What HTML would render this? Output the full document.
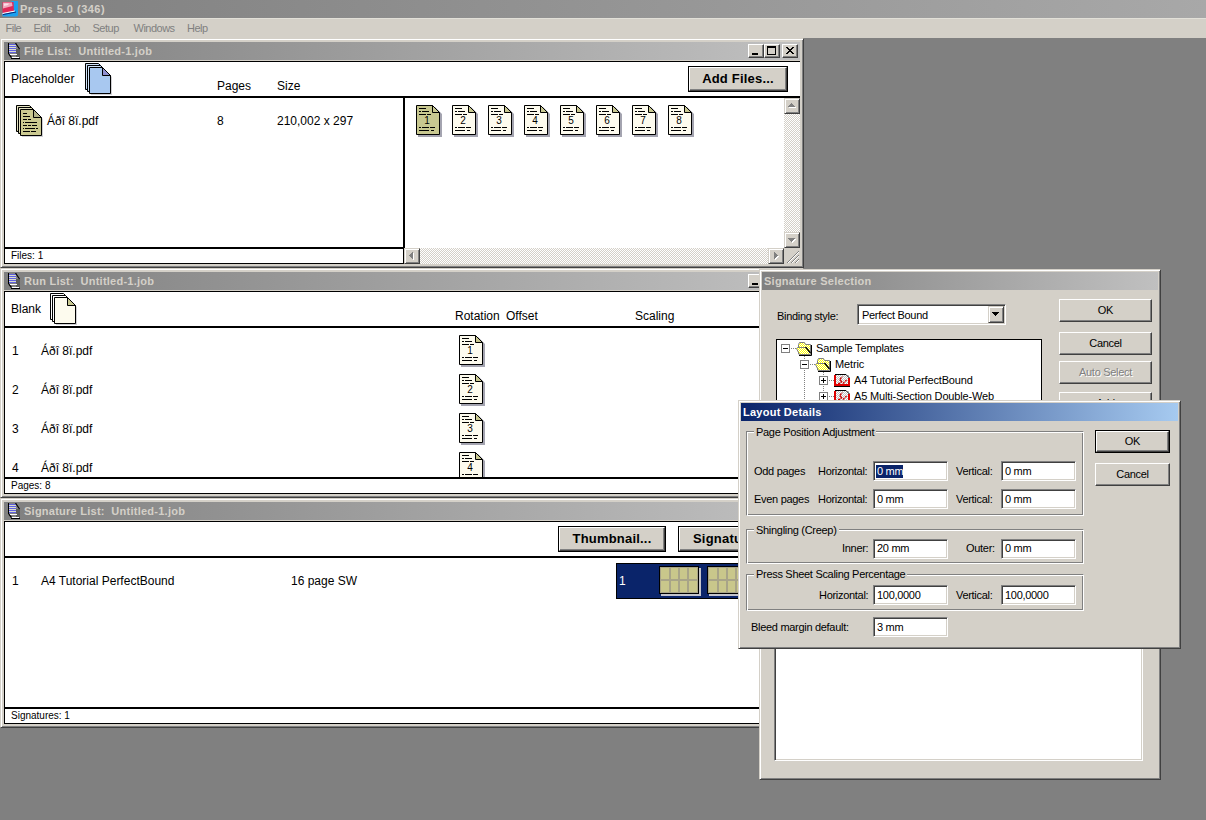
<!DOCTYPE html>
<html><head><meta charset="utf-8">
<style>
html,body{margin:0;padding:0;}
body{width:1206px;height:820px;overflow:hidden;position:relative;background:#808080;font-family:"Liberation Sans",sans-serif;font-size:11px;color:#000;}
div{box-sizing:border-box;}
.t{position:absolute;white-space:nowrap;line-height:1;}
.chk{background-color:#fff;background-image:linear-gradient(45deg,#d4d0c8 25%,transparent 25%,transparent 75%,#d4d0c8 75%),linear-gradient(45deg,#d4d0c8 25%,transparent 25%,transparent 75%,#d4d0c8 75%);background-size:2px 2px;background-position:0 0,1px 1px;}
</style></head><body>

<svg width="0" height="0" style="position:absolute">
<defs>
<symbol id="doc16" viewBox="0 0 16 16">
<rect x="9" y="6" width="4" height="9" fill="#5c5c5c"/>
<rect x="2" y="1" width="7" height="9" fill="#d8dccc"/>
<path d="M2 1.5H9M2 3.5H9M2 5.5H9M2 7.5H9M2 9.5H9" stroke="#6060e0"/>
<path d="M1.5 0V11" stroke="#000"/>
<path d="M8.5 0L12.5 6" stroke="#000" stroke-width="1.2"/>
<path d="M1.8 11.2L4.5 14.5" stroke="#000" stroke-width="1.2"/>
<path d="M4 15.5H13" stroke="#000"/>
<path d="M3 11.5H10M5 14.5H12" stroke="#fff"/>
</symbol>
<pattern id="ychk" width="2" height="2" patternUnits="userSpaceOnUse"><rect width="2" height="2" fill="#ffff00"/><rect width="1" height="1" fill="#fff"/><rect x="1" y="1" width="1" height="1" fill="#fff"/></pattern>
<pattern id="gchk" width="2" height="2" patternUnits="userSpaceOnUse"><rect width="2" height="2" fill="#c0c0c0"/><rect width="1" height="1" fill="#fff"/><rect x="1" y="1" width="1" height="1" fill="#fff"/></pattern>
<symbol id="pg" viewBox="0 0 26 32">
<path d="M2 2H19L26 9V32H2Z" fill="#a4a4b0"/>
<path d="M0.5 0.5H16.5L23.5 7.5V29.5H0.5Z" fill="currentColor" stroke="#000"/>
<path d="M16.5 0.5V7.5H23.5Z" fill="#c8c890" stroke="#000" stroke-linejoin="bevel"/>
<path d="M3 3.5H10M3 6.5H5M6 6.5H13M3 9.5H10M11 9.5H15M3 22.5H5M6 22.5H13M14 22.5H19M3 25.5H13M15 25.5H18" stroke="#000"/>
</symbol>
</defs>
</svg>

<div style="position:absolute;left:0px;top:0px;width:1206px;height:18px;background:linear-gradient(to right,#808080,#a8a8a8);"></div>
<div style="position:absolute;left:2px;top:1px;"><svg width="17" height="16" style="display:block">
<path d="M10 0H16V14.5L14 15.5H0.5V11Z" fill="#1aa0f0"/>
<path d="M0.5 1H11.5L12 10L0.5 12.5Z" fill="#e02858"/>
<path d="M1 1.5H10L10.5 5L1 7.5Z" fill="#f0a8bc"/>
<path d="M2 2.5H7L6 4L2 5Z" fill="#fbe0e8"/>
<path d="M0.5 12.5L13 10" stroke="#fff" stroke-width="1.2"/>
<path d="M1 13.6L14 11" stroke="#0c2a78" stroke-width="1"/>
</svg></div>
<div class="t" style="left:20px;top:4px;font-size:11px;font-weight:bold;color:#d4d0c8;letter-spacing:0.5px;">Preps 5.0 (346)</div>
<div style="position:absolute;left:0px;top:18px;width:1206px;height:20px;background:#d4d0c8;"></div>
<div style="position:absolute;left:0px;top:18px;width:1206px;height:1px;background:#e2e0d8;"></div>
<div class="t" style="left:5.5px;top:23px;font-size:11px;color:#808080;letter-spacing:-0.5px;">File</div>
<div class="t" style="left:33.5px;top:23px;font-size:11px;color:#808080;letter-spacing:-0.5px;">Edit</div>
<div class="t" style="left:63.5px;top:23px;font-size:11px;color:#808080;letter-spacing:-0.5px;">Job</div>
<div class="t" style="left:92.5px;top:23px;font-size:11px;color:#808080;letter-spacing:-0.5px;">Setup</div>
<div class="t" style="left:133.5px;top:23px;font-size:11px;color:#808080;letter-spacing:-0.5px;">Windows</div>
<div class="t" style="left:187px;top:23px;font-size:11px;color:#808080;letter-spacing:-0.5px;">Help</div>
<div style="position:absolute;left:0px;top:38px;width:804px;height:230px;border:1px solid;border-color:#d4d0c8 #404040 #404040 #d4d0c8;box-shadow:inset 1px 1px #fff,inset -1px -1px #808080;background:#d4d0c8;"></div>
<div style="position:absolute;left:4px;top:42px;width:796px;height:18px;background:linear-gradient(to right,#808080,#c0c0c0);"></div>
<div style="position:absolute;left:7px;top:43px;"><svg width="16" height="16"><use href="#doc16"/></svg></div>
<div class="t" style="left:24px;top:46px;font-size:11px;font-weight:bold;color:#d4d0c8;letter-spacing:0.25px;">File List:&nbsp; Untitled-1.job</div>
<div style="position:absolute;left:748px;top:44px;width:16px;height:14px;border:1px solid;border-color:#fff #404040 #404040 #fff;box-shadow:inset -1px -1px #808080;background:#d4d0c8;"></div>
<div style="position:absolute;left:752px;top:53px;width:6px;height:2px;background:#000;"></div>
<div style="position:absolute;left:764px;top:44px;width:16px;height:14px;border:1px solid;border-color:#fff #404040 #404040 #fff;box-shadow:inset -1px -1px #808080;background:#d4d0c8;"></div>
<div style="position:absolute;left:767px;top:46px;width:9px;height:9px;border:1px solid #000;border-top-width:2px;"></div>
<div style="position:absolute;left:782px;top:44px;width:16px;height:14px;border:1px solid;border-color:#fff #404040 #404040 #fff;box-shadow:inset -1px -1px #808080;background:#d4d0c8;"></div>
<div style="position:absolute;left:786px;top:47px;"><svg width="8" height="7" style="display:block"><path d="M0 0L7 7M1 0L8 7M7 0L0 7M8 0L1 7" stroke="#000" stroke-width="1" shape-rendering="crispEdges"/></svg></div>
<div style="position:absolute;left:4px;top:61px;width:796px;height:203px;overflow:hidden;background:#fff;">
<div style="position:absolute;left:0px;top:0px;width:796px;height:1px;background:#000;"></div>
<div style="position:absolute;left:0px;top:0px;width:1px;height:203px;background:#000;"></div>
<div style="position:absolute;left:0px;top:202px;width:796px;height:1px;background:#000;"></div>
<div class="t" style="left:7px;top:12px;font-size:12px;color:#000;">Placeholder</div>
<div style="position:absolute;left:81px;top:2px;"><svg width="28" height="34" style="display:block"><path d="M0.5 0.5H13.5L21.5 8.5V26.5H0.5Z" fill="#a8c8f0" stroke="#000"/><path d="M1.5 25V1.5H13" fill="none" stroke="#cfe2f8"/><path d="M2.5 2.5H15.5L23.5 10.5V28.5H2.5Z" fill="#a8c8f0" stroke="#000"/><path d="M3.5 27V3.5H15" fill="none" stroke="#cfe2f8"/><path d="M6 6H19L27 14V32H6Z" fill="#b0b0b8" opacity="0.6"/><path d="M4.5 4.5H17.5L25.5 12.5V30.5H4.5Z" fill="#a8c8f0" stroke="#000"/><path d="M17.5 4.5V12.5H25.5Z" fill="#9090d0" stroke="#000" stroke-linejoin="bevel"/></svg></div>
<div class="t" style="left:213px;top:19px;font-size:12px;color:#000;">Pages</div>
<div class="t" style="left:273px;top:19px;font-size:12px;color:#000;">Size</div>
<div style="position:absolute;left:684px;top:5px;width:100px;height:26px;background:#000;"></div>
<div style="position:absolute;left:685px;top:6px;width:98px;height:24px;border:1px solid;border-color:#fff #404040 #404040 #fff;box-shadow:inset -1px -1px #808080;background:#d4d0c8;"></div>
<div class="t" style="left:684px;top:11px;width:100px;text-align:center;font-size:13px;font-weight:bold;letter-spacing:0.2px;color:#000;">Add Files...</div>
<div style="position:absolute;left:0px;top:35px;width:796px;height:2px;background:#000;"></div>
<div style="position:absolute;left:12px;top:44px;"><svg width="28" height="34" style="display:block"><path d="M0.5 0.5H13.5L21.5 8.5V26.5H0.5Z" fill="#cbc991" stroke="#000"/><path d="M1.5 25V1.5H13" fill="none" stroke="#e6e4c4"/><path d="M2.5 2.5H15.5L23.5 10.5V28.5H2.5Z" fill="#cbc991" stroke="#000"/><path d="M3.5 27V3.5H15" fill="none" stroke="#e6e4c4"/><path d="M6 6H19L27 14V32H6Z" fill="#b0b0b8" opacity="0.6"/><path d="M4.5 4.5H17.5L25.5 12.5V30.5H4.5Z" fill="#cbc991" stroke="#000"/><path d="M17.5 4.5V12.5H25.5Z" fill="#b4b48c" stroke="#000" stroke-linejoin="bevel"/><path d="M7 8.5H11M7 11.5H14M7 14.5H11M12 14.5H15M7 17.5H8M9 17.5H21M7 20.5H11M12 20.5H15M16 20.5H21M7 23.5H8M9 23.5H19M20 23.5H22M7 26.5H14M15 26.5H20" stroke="#000"/></svg></div>
<div class="t" style="left:43px;top:54px;font-size:12px;color:#000;">Áðî 8ï.pdf</div>
<div class="t" style="left:213px;top:54px;font-size:12px;color:#000;">8</div>
<div class="t" style="left:273px;top:54px;font-size:12px;color:#000;">210,002 x 297</div>
<div style="position:absolute;left:399px;top:37px;width:2px;height:166px;background:#000;"></div>
<div style="position:absolute;left:0px;top:186px;width:401px;height:2px;background:#000;"></div>
<div class="t" style="left:7px;top:190px;font-size:10px;color:#000;">Files: 1</div>
<div style="position:absolute;left:412px;top:44px;"><div style="position:relative;width:26px;height:32px;color:#c8c890"><svg width="26" height="32" style="display:block"><use href="#pg"/></svg><div class="t" style="left:0;width:22px;top:11px;text-align:center;font-size:10px;color:#000">1</div></div></div>
<div style="position:absolute;left:448px;top:44px;"><div style="position:relative;width:26px;height:32px;color:#fdfbee"><svg width="26" height="32" style="display:block"><use href="#pg"/></svg><div class="t" style="left:0;width:22px;top:11px;text-align:center;font-size:10px;color:#000">2</div></div></div>
<div style="position:absolute;left:484px;top:44px;"><div style="position:relative;width:26px;height:32px;color:#fdfbee"><svg width="26" height="32" style="display:block"><use href="#pg"/></svg><div class="t" style="left:0;width:22px;top:11px;text-align:center;font-size:10px;color:#000">3</div></div></div>
<div style="position:absolute;left:520px;top:44px;"><div style="position:relative;width:26px;height:32px;color:#fdfbee"><svg width="26" height="32" style="display:block"><use href="#pg"/></svg><div class="t" style="left:0;width:22px;top:11px;text-align:center;font-size:10px;color:#000">4</div></div></div>
<div style="position:absolute;left:556px;top:44px;"><div style="position:relative;width:26px;height:32px;color:#fdfbee"><svg width="26" height="32" style="display:block"><use href="#pg"/></svg><div class="t" style="left:0;width:22px;top:11px;text-align:center;font-size:10px;color:#000">5</div></div></div>
<div style="position:absolute;left:592px;top:44px;"><div style="position:relative;width:26px;height:32px;color:#fdfbee"><svg width="26" height="32" style="display:block"><use href="#pg"/></svg><div class="t" style="left:0;width:22px;top:11px;text-align:center;font-size:10px;color:#000">6</div></div></div>
<div style="position:absolute;left:628px;top:44px;"><div style="position:relative;width:26px;height:32px;color:#fdfbee"><svg width="26" height="32" style="display:block"><use href="#pg"/></svg><div class="t" style="left:0;width:22px;top:11px;text-align:center;font-size:10px;color:#000">7</div></div></div>
<div style="position:absolute;left:664px;top:44px;"><div style="position:relative;width:26px;height:32px;color:#fdfbee"><svg width="26" height="32" style="display:block"><use href="#pg"/></svg><div class="t" style="left:0;width:22px;top:11px;text-align:center;font-size:10px;color:#000">8</div></div></div>
<div style="position:absolute;left:780px;top:53px;width:16px;height:118px;background:repeating-conic-gradient(#d4d0c8 0 25%,#fff 0 50%) 0 0/2px 2px;"></div>
<div style="position:absolute;left:416px;top:187px;width:348px;height:16px;background:repeating-conic-gradient(#d4d0c8 0 25%,#fff 0 50%) 0 0/2px 2px;"></div>
<div style="position:absolute;left:780px;top:37px;width:16px;height:16px;border:1px solid;border-color:#d4d0c8 #404040 #404040 #d4d0c8;box-shadow:inset 1px 1px #fff,inset -1px -1px #808080;background:#d4d0c8;"></div>
<div style="position:absolute;left:780px;top:37px;"><svg width="16" height="16" style="display:block"><rect x="5" y="9" width="7" height="1" fill="#fff"/><rect x="6" y="8" width="5" height="1" fill="#fff"/><rect x="7" y="7" width="3" height="1" fill="#fff"/><rect x="8" y="6" width="1" height="1" fill="#fff"/><rect x="4" y="8" width="7" height="1" fill="#808080"/><rect x="5" y="7" width="5" height="1" fill="#808080"/><rect x="6" y="6" width="3" height="1" fill="#808080"/><rect x="7" y="5" width="1" height="1" fill="#808080"/></svg></div>
<div style="position:absolute;left:780px;top:171px;width:16px;height:16px;border:1px solid;border-color:#d4d0c8 #404040 #404040 #d4d0c8;box-shadow:inset 1px 1px #fff,inset -1px -1px #808080;background:#d4d0c8;"></div>
<div style="position:absolute;left:780px;top:171px;"><svg width="16" height="16" style="display:block"><rect x="5" y="7" width="7" height="1" fill="#fff"/><rect x="6" y="8" width="5" height="1" fill="#fff"/><rect x="7" y="9" width="3" height="1" fill="#fff"/><rect x="8" y="10" width="1" height="1" fill="#fff"/><rect x="4" y="6" width="7" height="1" fill="#808080"/><rect x="5" y="7" width="5" height="1" fill="#808080"/><rect x="6" y="8" width="3" height="1" fill="#808080"/><rect x="7" y="9" width="1" height="1" fill="#808080"/></svg></div>
<div style="position:absolute;left:400px;top:187px;width:16px;height:16px;border:1px solid;border-color:#d4d0c8 #404040 #404040 #d4d0c8;box-shadow:inset 1px 1px #fff,inset -1px -1px #808080;background:#d4d0c8;"></div>
<div style="position:absolute;left:400px;top:187px;"><svg width="16" height="16" style="display:block"><rect x="9" y="5" width="1" height="7" fill="#fff"/><rect x="8" y="6" width="1" height="5" fill="#fff"/><rect x="7" y="7" width="1" height="3" fill="#fff"/><rect x="6" y="8" width="1" height="1" fill="#fff"/><rect x="8" y="4" width="1" height="7" fill="#808080"/><rect x="7" y="5" width="1" height="5" fill="#808080"/><rect x="6" y="6" width="1" height="3" fill="#808080"/><rect x="5" y="7" width="1" height="1" fill="#808080"/></svg></div>
<div style="position:absolute;left:764px;top:187px;width:16px;height:16px;border:1px solid;border-color:#d4d0c8 #404040 #404040 #d4d0c8;box-shadow:inset 1px 1px #fff,inset -1px -1px #808080;background:#d4d0c8;"></div>
<div style="position:absolute;left:764px;top:187px;"><svg width="16" height="16" style="display:block"><rect x="7" y="5" width="1" height="7" fill="#fff"/><rect x="8" y="6" width="1" height="5" fill="#fff"/><rect x="9" y="7" width="1" height="3" fill="#fff"/><rect x="10" y="8" width="1" height="1" fill="#fff"/><rect x="6" y="4" width="1" height="7" fill="#808080"/><rect x="7" y="5" width="1" height="5" fill="#808080"/><rect x="8" y="6" width="1" height="3" fill="#808080"/><rect x="9" y="7" width="1" height="1" fill="#808080"/></svg></div>
<div style="position:absolute;left:780px;top:187px;width:16px;height:16px;background:#d4d0c8;"></div>
<div style="position:absolute;left:780px;top:187px;"><svg width="16" height="16" style="display:block"><path d="M15 3L3 15M15 7L7 15M15 11L11 15" stroke="#808080"/><path d="M15 4L4 15M15 8L8 15M15 12L12 15" stroke="#fff"/></svg></div>
</div>
<div style="position:absolute;left:0px;top:268px;width:804px;height:230px;border:1px solid;border-color:#d4d0c8 #404040 #404040 #d4d0c8;box-shadow:inset 1px 1px #fff,inset -1px -1px #808080;background:#d4d0c8;"></div>
<div style="position:absolute;left:4px;top:272px;width:796px;height:18px;background:linear-gradient(to right,#808080,#c0c0c0);"></div>
<div style="position:absolute;left:7px;top:273px;"><svg width="16" height="16"><use href="#doc16"/></svg></div>
<div class="t" style="left:24px;top:276px;font-size:11px;font-weight:bold;color:#d4d0c8;letter-spacing:0.25px;">Run List:&nbsp; Untitled-1.job</div>
<div style="position:absolute;left:748px;top:274px;width:16px;height:14px;border:1px solid;border-color:#fff #404040 #404040 #fff;box-shadow:inset -1px -1px #808080;background:#d4d0c8;"></div>
<div style="position:absolute;left:752px;top:283px;width:6px;height:2px;background:#000;"></div>
<div style="position:absolute;left:764px;top:274px;width:16px;height:14px;border:1px solid;border-color:#fff #404040 #404040 #fff;box-shadow:inset -1px -1px #808080;background:#d4d0c8;"></div>
<div style="position:absolute;left:767px;top:276px;width:9px;height:9px;border:1px solid #000;border-top-width:2px;"></div>
<div style="position:absolute;left:782px;top:274px;width:16px;height:14px;border:1px solid;border-color:#fff #404040 #404040 #fff;box-shadow:inset -1px -1px #808080;background:#d4d0c8;"></div>
<div style="position:absolute;left:786px;top:277px;"><svg width="8" height="7" style="display:block"><path d="M0 0L7 7M1 0L8 7M7 0L0 7M8 0L1 7" stroke="#000" stroke-width="1" shape-rendering="crispEdges"/></svg></div>
<div style="position:absolute;left:4px;top:291px;width:796px;height:203px;overflow:hidden;background:#fff;">
<div style="position:absolute;left:0px;top:0px;width:796px;height:1px;background:#000;"></div>
<div style="position:absolute;left:0px;top:0px;width:1px;height:203px;background:#000;"></div>
<div style="position:absolute;left:0px;top:202px;width:796px;height:1px;background:#000;"></div>
<div class="t" style="left:7px;top:12px;font-size:12px;color:#000;">Blank</div>
<div style="position:absolute;left:46px;top:2px;"><svg width="28" height="34" style="display:block"><path d="M0.5 0.5H13.5L21.5 8.5V26.5H0.5Z" fill="#fdfbee" stroke="#000"/><path d="M1.5 25V1.5H13" fill="none" stroke="#fff"/><path d="M2.5 2.5H15.5L23.5 10.5V28.5H2.5Z" fill="#fdfbee" stroke="#000"/><path d="M3.5 27V3.5H15" fill="none" stroke="#fff"/><path d="M6 6H19L27 14V32H6Z" fill="#b0b0b8" opacity="0.6"/><path d="M4.5 4.5H17.5L25.5 12.5V30.5H4.5Z" fill="#fdfbee" stroke="#000"/><path d="M17.5 4.5V12.5H25.5Z" fill="#c8c890" stroke="#000" stroke-linejoin="bevel"/></svg></div>
<div class="t" style="left:451px;top:19px;font-size:12px;color:#000;">Rotation</div>
<div class="t" style="left:502px;top:19px;font-size:12px;color:#000;">Offset</div>
<div class="t" style="left:631px;top:19px;font-size:12px;color:#000;">Scaling</div>
<div style="position:absolute;left:0px;top:35px;width:796px;height:2px;background:#000;"></div>
<div style="position:absolute;left:0px;top:37px;width:796px;height:149px;overflow:hidden;">
<div class="t" style="left:8px;top:17px;font-size:12px;color:#000;">1</div>
<div class="t" style="left:37px;top:17px;font-size:12px;color:#000;">Áðî 8ï.pdf</div>
<div style="position:absolute;left:455px;top:7px;"><div style="position:relative;width:26px;height:32px;color:#fdfbee"><svg width="26" height="32" style="display:block"><use href="#pg"/></svg><div class="t" style="left:0;width:22px;top:11px;text-align:center;font-size:10px;color:#000">1</div></div></div>
<div class="t" style="left:8px;top:56px;font-size:12px;color:#000;">2</div>
<div class="t" style="left:37px;top:56px;font-size:12px;color:#000;">Áðî 8ï.pdf</div>
<div style="position:absolute;left:455px;top:46px;"><div style="position:relative;width:26px;height:32px;color:#fdfbee"><svg width="26" height="32" style="display:block"><use href="#pg"/></svg><div class="t" style="left:0;width:22px;top:11px;text-align:center;font-size:10px;color:#000">2</div></div></div>
<div class="t" style="left:8px;top:95px;font-size:12px;color:#000;">3</div>
<div class="t" style="left:37px;top:95px;font-size:12px;color:#000;">Áðî 8ï.pdf</div>
<div style="position:absolute;left:455px;top:85px;"><div style="position:relative;width:26px;height:32px;color:#fdfbee"><svg width="26" height="32" style="display:block"><use href="#pg"/></svg><div class="t" style="left:0;width:22px;top:11px;text-align:center;font-size:10px;color:#000">3</div></div></div>
<div class="t" style="left:8px;top:134px;font-size:12px;color:#000;">4</div>
<div class="t" style="left:37px;top:134px;font-size:12px;color:#000;">Áðî 8ï.pdf</div>
<div style="position:absolute;left:455px;top:124px;"><div style="position:relative;width:26px;height:32px;color:#fdfbee"><svg width="26" height="32" style="display:block"><use href="#pg"/></svg><div class="t" style="left:0;width:22px;top:11px;text-align:center;font-size:10px;color:#000">4</div></div></div>
</div>
<div style="position:absolute;left:0px;top:186px;width:796px;height:2px;background:#000;"></div>
<div class="t" style="left:7px;top:190px;font-size:10px;color:#000;">Pages: 8</div>
</div>
<div style="position:absolute;left:0px;top:498px;width:804px;height:230px;border:1px solid;border-color:#d4d0c8 #404040 #404040 #d4d0c8;box-shadow:inset 1px 1px #fff,inset -1px -1px #808080;background:#d4d0c8;"></div>
<div style="position:absolute;left:4px;top:502px;width:796px;height:18px;background:linear-gradient(to right,#808080,#c0c0c0);"></div>
<div style="position:absolute;left:7px;top:503px;"><svg width="16" height="16"><use href="#doc16"/></svg></div>
<div class="t" style="left:24px;top:506px;font-size:11px;font-weight:bold;color:#d4d0c8;letter-spacing:0.25px;">Signature List:&nbsp; Untitled-1.job</div>
<div style="position:absolute;left:748px;top:504px;width:16px;height:14px;border:1px solid;border-color:#fff #404040 #404040 #fff;box-shadow:inset -1px -1px #808080;background:#d4d0c8;"></div>
<div style="position:absolute;left:752px;top:513px;width:6px;height:2px;background:#000;"></div>
<div style="position:absolute;left:764px;top:504px;width:16px;height:14px;border:1px solid;border-color:#fff #404040 #404040 #fff;box-shadow:inset -1px -1px #808080;background:#d4d0c8;"></div>
<div style="position:absolute;left:767px;top:506px;width:9px;height:9px;border:1px solid #000;border-top-width:2px;"></div>
<div style="position:absolute;left:782px;top:504px;width:16px;height:14px;border:1px solid;border-color:#fff #404040 #404040 #fff;box-shadow:inset -1px -1px #808080;background:#d4d0c8;"></div>
<div style="position:absolute;left:786px;top:507px;"><svg width="8" height="7" style="display:block"><path d="M0 0L7 7M1 0L8 7M7 0L0 7M8 0L1 7" stroke="#000" stroke-width="1" shape-rendering="crispEdges"/></svg></div>
<div style="position:absolute;left:4px;top:521px;width:796px;height:203px;overflow:hidden;background:#fff;">
<div style="position:absolute;left:0px;top:0px;width:796px;height:1px;background:#000;"></div>
<div style="position:absolute;left:0px;top:0px;width:1px;height:203px;background:#000;"></div>
<div style="position:absolute;left:0px;top:202px;width:796px;height:1px;background:#000;"></div>
<div style="position:absolute;left:554px;top:5px;width:108px;height:26px;background:#000;"></div>
<div style="position:absolute;left:555px;top:6px;width:106px;height:24px;border:1px solid;border-color:#fff #404040 #404040 #fff;box-shadow:inset -1px -1px #808080;background:#d4d0c8;"></div>
<div class="t" style="left:554px;top:11px;width:108px;text-align:center;font-size:13px;font-weight:bold;letter-spacing:0.2px;color:#000;">Thumbnail...</div>
<div style="position:absolute;left:674px;top:5px;width:123px;height:26px;background:#000;"></div>
<div style="position:absolute;left:675px;top:6px;width:121px;height:24px;border:1px solid;border-color:#fff #404040 #404040 #fff;box-shadow:inset -1px -1px #808080;background:#d4d0c8;"></div>
<div class="t" style="left:674px;top:11px;width:123px;text-align:center;font-size:13px;font-weight:bold;letter-spacing:0.2px;color:#000;"></div>
<div class="t" style="left:689px;top:11px;font-size:13px;font-weight:bold;color:#000;letter-spacing:0.2px;">Signature...</div>
<div style="position:absolute;left:0px;top:35px;width:796px;height:2px;background:#000;"></div>
<div class="t" style="left:8px;top:54px;font-size:12px;color:#000;">1</div>
<div class="t" style="left:37px;top:54px;font-size:12px;color:#000;">A4 Tutorial PerfectBound</div>
<div class="t" style="left:287px;top:54px;font-size:12px;color:#000;">16 page SW</div>
<div style="position:absolute;left:612px;top:42px;width:184px;height:36px;background:#0a246a;border:1px solid #000;"></div>
<div class="t" style="left:615px;top:54px;font-size:12px;color:#fff;">1</div>
<div style="position:absolute;left:657px;top:47px;width:40px;height:28px;background:#c4c4cc;"></div>
<div style="position:absolute;left:655px;top:45px;width:40px;height:28px;background:#000;"></div>
<div style="position:absolute;left:656px;top:46px;width:38px;height:26px;background:#a8a488;"></div>
<div style="position:absolute;left:657px;top:47px;width:8px;height:11px;background:#c9c78b;"></div>
<div style="position:absolute;left:657px;top:60px;width:8px;height:11px;background:#c9c78b;"></div>
<div style="position:absolute;left:667px;top:47px;width:7px;height:11px;background:#c9c78b;"></div>
<div style="position:absolute;left:667px;top:60px;width:7px;height:11px;background:#c9c78b;"></div>
<div style="position:absolute;left:676px;top:47px;width:7px;height:11px;background:#c9c78b;"></div>
<div style="position:absolute;left:676px;top:60px;width:7px;height:11px;background:#c9c78b;"></div>
<div style="position:absolute;left:685px;top:47px;width:8px;height:11px;background:#c9c78b;"></div>
<div style="position:absolute;left:685px;top:60px;width:8px;height:11px;background:#c9c78b;"></div>
<div style="position:absolute;left:705px;top:47px;width:40px;height:28px;background:#c4c4cc;"></div>
<div style="position:absolute;left:703px;top:45px;width:40px;height:28px;background:#000;"></div>
<div style="position:absolute;left:704px;top:46px;width:38px;height:26px;background:#a8a488;"></div>
<div style="position:absolute;left:705px;top:47px;width:8px;height:11px;background:#c9c78b;"></div>
<div style="position:absolute;left:705px;top:60px;width:8px;height:11px;background:#c9c78b;"></div>
<div style="position:absolute;left:715px;top:47px;width:7px;height:11px;background:#c9c78b;"></div>
<div style="position:absolute;left:715px;top:60px;width:7px;height:11px;background:#c9c78b;"></div>
<div style="position:absolute;left:724px;top:47px;width:7px;height:11px;background:#c9c78b;"></div>
<div style="position:absolute;left:724px;top:60px;width:7px;height:11px;background:#c9c78b;"></div>
<div style="position:absolute;left:733px;top:47px;width:8px;height:11px;background:#c9c78b;"></div>
<div style="position:absolute;left:733px;top:60px;width:8px;height:11px;background:#c9c78b;"></div>
<div style="position:absolute;left:753px;top:47px;width:40px;height:28px;background:#c4c4cc;"></div>
<div style="position:absolute;left:751px;top:45px;width:40px;height:28px;background:#000;"></div>
<div style="position:absolute;left:752px;top:46px;width:38px;height:26px;background:#a8a488;"></div>
<div style="position:absolute;left:753px;top:47px;width:8px;height:11px;background:#c9c78b;"></div>
<div style="position:absolute;left:753px;top:60px;width:8px;height:11px;background:#c9c78b;"></div>
<div style="position:absolute;left:763px;top:47px;width:7px;height:11px;background:#c9c78b;"></div>
<div style="position:absolute;left:763px;top:60px;width:7px;height:11px;background:#c9c78b;"></div>
<div style="position:absolute;left:772px;top:47px;width:7px;height:11px;background:#c9c78b;"></div>
<div style="position:absolute;left:772px;top:60px;width:7px;height:11px;background:#c9c78b;"></div>
<div style="position:absolute;left:781px;top:47px;width:8px;height:11px;background:#c9c78b;"></div>
<div style="position:absolute;left:781px;top:60px;width:8px;height:11px;background:#c9c78b;"></div>
<div style="position:absolute;left:0px;top:186px;width:796px;height:2px;background:#000;"></div>
<div class="t" style="left:7px;top:190px;font-size:10px;color:#000;">Signatures: 1</div>
</div>
<div style="position:absolute;left:759px;top:269px;width:402px;height:511px;border:1px solid;border-color:#d4d0c8 #404040 #404040 #d4d0c8;box-shadow:inset 1px 1px #fff,inset -1px -1px #808080;background:#d4d0c8;"></div>
<div style="position:absolute;left:762px;top:272px;width:396px;height:18px;background:linear-gradient(to right,#808080,#c0c0c0);"></div>
<div class="t" style="left:764px;top:276px;font-size:11px;font-weight:bold;color:#d4d0c8;letter-spacing:0.25px;">Signature Selection</div>
<div class="t" style="left:777px;top:311px;font-size:11px;color:#000;letter-spacing:-0.3px;">Binding style:</div>
<div style="position:absolute;left:857px;top:304px;width:149px;height:21px;border:1px solid;border-color:#808080 #fff #fff #808080;box-shadow:inset 1px 1px #404040,inset -1px -1px #d4d0c8;background:#fff;"></div>
<div class="t" style="left:862px;top:310px;font-size:11px;color:#000;letter-spacing:-0.3px;">Perfect Bound</div>
<div style="position:absolute;left:988px;top:306px;width:16px;height:17px;border:1px solid;border-color:#d4d0c8 #404040 #404040 #d4d0c8;box-shadow:inset 1px 1px #fff,inset -1px -1px #808080;background:#d4d0c8;"></div>
<div style="position:absolute;left:988px;top:306px;"><svg width="16" height="17" style="display:block"><rect x="4" y="6" width="7" height="1" fill="#000"/><rect x="5" y="7" width="5" height="1" fill="#000"/><rect x="6" y="8" width="3" height="1" fill="#000"/><rect x="7" y="9" width="1" height="1" fill="#000"/></svg></div>
<div style="position:absolute;left:1059px;top:299px;width:93px;height:23px;border:1px solid;border-color:#fff #404040 #404040 #fff;box-shadow:inset -1px -1px #808080;background:#d4d0c8;"></div>
<div class="t" style="left:1059px;top:305px;width:93px;text-align:center;font-size:11px;letter-spacing:-0.3px;color:#000;">OK</div>
<div style="position:absolute;left:1059px;top:332px;width:93px;height:23px;border:1px solid;border-color:#fff #404040 #404040 #fff;box-shadow:inset -1px -1px #808080;background:#d4d0c8;"></div>
<div class="t" style="left:1059px;top:338px;width:93px;text-align:center;font-size:11px;letter-spacing:-0.3px;color:#000;">Cancel</div>
<div style="position:absolute;left:1059px;top:361px;width:93px;height:23px;border:1px solid;border-color:#fff #404040 #404040 #fff;box-shadow:inset -1px -1px #808080;background:#d4d0c8;"></div>
<div class="t" style="left:1060px;top:368px;width:93px;text-align:center;font-size:11px;letter-spacing:-0.3px;color:#fff;">Auto Select</div>
<div class="t" style="left:1059px;top:367px;width:93px;text-align:center;font-size:11px;letter-spacing:-0.3px;color:#808080;">Auto Select</div>
<div style="position:absolute;left:1059px;top:392px;width:93px;height:23px;border:1px solid;border-color:#fff #404040 #404040 #fff;box-shadow:inset -1px -1px #808080;background:#d4d0c8;"></div>
<div class="t" style="left:1059px;top:398px;width:93px;text-align:center;font-size:11px;letter-spacing:-0.3px;color:#000;">Add</div>
<div style="position:absolute;left:776px;top:339px;width:266px;height:82px;background:#fff;border:1px solid #000;"></div>
<div style="position:absolute;left:777px;top:340px;width:264px;height:60px;overflow:hidden;">
<div style="position:absolute;left:14px;top:8px;width:1px;height:1px;background:#808080;"></div>
<div style="position:absolute;left:16px;top:8px;width:1px;height:1px;background:#808080;"></div>
<div style="position:absolute;left:18px;top:8px;width:1px;height:1px;background:#808080;"></div>
<div style="position:absolute;left:27px;top:16px;width:1px;height:1px;background:#808080;"></div>
<div style="position:absolute;left:27px;top:18px;width:1px;height:1px;background:#808080;"></div>
<div style="position:absolute;left:27px;top:30px;width:1px;height:1px;background:#808080;"></div>
<div style="position:absolute;left:27px;top:32px;width:1px;height:1px;background:#808080;"></div>
<div style="position:absolute;left:27px;top:34px;width:1px;height:1px;background:#808080;"></div>
<div style="position:absolute;left:27px;top:36px;width:1px;height:1px;background:#808080;"></div>
<div style="position:absolute;left:27px;top:38px;width:1px;height:1px;background:#808080;"></div>
<div style="position:absolute;left:27px;top:40px;width:1px;height:1px;background:#808080;"></div>
<div style="position:absolute;left:27px;top:42px;width:1px;height:1px;background:#808080;"></div>
<div style="position:absolute;left:27px;top:44px;width:1px;height:1px;background:#808080;"></div>
<div style="position:absolute;left:27px;top:46px;width:1px;height:1px;background:#808080;"></div>
<div style="position:absolute;left:27px;top:48px;width:1px;height:1px;background:#808080;"></div>
<div style="position:absolute;left:27px;top:50px;width:1px;height:1px;background:#808080;"></div>
<div style="position:absolute;left:27px;top:52px;width:1px;height:1px;background:#808080;"></div>
<div style="position:absolute;left:27px;top:54px;width:1px;height:1px;background:#808080;"></div>
<div style="position:absolute;left:27px;top:56px;width:1px;height:1px;background:#808080;"></div>
<div style="position:absolute;left:27px;top:58px;width:1px;height:1px;background:#808080;"></div>
<div style="position:absolute;left:27px;top:60px;width:1px;height:1px;background:#808080;"></div>
<div style="position:absolute;left:33px;top:24px;width:1px;height:1px;background:#808080;"></div>
<div style="position:absolute;left:35px;top:24px;width:1px;height:1px;background:#808080;"></div>
<div style="position:absolute;left:37px;top:24px;width:1px;height:1px;background:#808080;"></div>
<div style="position:absolute;left:46px;top:32px;width:1px;height:1px;background:#808080;"></div>
<div style="position:absolute;left:46px;top:34px;width:1px;height:1px;background:#808080;"></div>
<div style="position:absolute;left:46px;top:46px;width:1px;height:1px;background:#808080;"></div>
<div style="position:absolute;left:46px;top:48px;width:1px;height:1px;background:#808080;"></div>
<div style="position:absolute;left:46px;top:50px;width:1px;height:1px;background:#808080;"></div>
<div style="position:absolute;left:52px;top:40px;width:1px;height:1px;background:#808080;"></div>
<div style="position:absolute;left:54px;top:40px;width:1px;height:1px;background:#808080;"></div>
<div style="position:absolute;left:56px;top:40px;width:1px;height:1px;background:#808080;"></div>
<div style="position:absolute;left:52px;top:56px;width:1px;height:1px;background:#808080;"></div>
<div style="position:absolute;left:54px;top:56px;width:1px;height:1px;background:#808080;"></div>
<div style="position:absolute;left:56px;top:56px;width:1px;height:1px;background:#808080;"></div>
<div style="position:absolute;left:4px;top:4px;width:9px;height:9px;background:#fff;border:1px solid #808080;"></div>
<div style="position:absolute;left:6px;top:8px;width:5px;height:1px;background:#000;"></div>
<div style="position:absolute;left:19px;top:2px;"><svg width="17" height="14" style="display:block"><path d="M2.5 2.5L3.5 0.5H8.5L9.5 2.5H14.5V12H2.5Z" fill="url(#ychk)" stroke="#808080"/><path d="M0.5 6.5L1.5 5.5H10.5L14.5 11.5V12.5H3.5Z" fill="url(#ychk)" stroke="#808080"/><path d="M9.5 5L14.5 11" stroke="#000" stroke-width="1.3"/><path d="M15.5 3V13.5H3" fill="none" stroke="#000"/></svg></div>
<div class="t" style="left:39px;top:3px;font-size:11px;color:#000;letter-spacing:-0.15px;">Sample Templates</div>
<div style="position:absolute;left:23px;top:20px;width:9px;height:9px;background:#fff;border:1px solid #808080;"></div>
<div style="position:absolute;left:25px;top:24px;width:5px;height:1px;background:#000;"></div>
<div style="position:absolute;left:38px;top:18px;"><svg width="17" height="14" style="display:block"><path d="M2.5 2.5L3.5 0.5H8.5L9.5 2.5H14.5V12H2.5Z" fill="url(#ychk)" stroke="#808080"/><path d="M0.5 6.5L1.5 5.5H10.5L14.5 11.5V12.5H3.5Z" fill="url(#ychk)" stroke="#808080"/><path d="M9.5 5L14.5 11" stroke="#000" stroke-width="1.3"/><path d="M15.5 3V13.5H3" fill="none" stroke="#000"/></svg></div>
<div class="t" style="left:58px;top:19px;font-size:11px;color:#000;letter-spacing:-0.15px;">Metric</div>
<div style="position:absolute;left:42px;top:36px;width:9px;height:9px;background:#fff;border:1px solid #808080;"></div>
<div style="position:absolute;left:44px;top:40px;width:5px;height:1px;background:#000;"></div>
<div style="position:absolute;left:46px;top:38px;width:1px;height:5px;background:#000;"></div>
<div style="position:absolute;left:57px;top:34px;"><svg width="16" height="13" style="display:block"><rect x="1" y="1" width="14" height="11" fill="url(#gchk)"/><path d="M1 0.5H12L15.5 4" fill="none" stroke="#000"/><rect x="0" y="1" width="2" height="11" fill="#e00000"/><rect x="0" y="10" width="16" height="2" fill="#e00000"/><rect x="14" y="4" width="2" height="8" fill="#e00000"/><path d="M0 12.5H16" stroke="#000"/><path d="M4 9.5H6L8 7L5.5 5.5L8.5 2.5M9 9.5L12.5 6" fill="none" stroke="#d00000" stroke-width="1.4" stroke-dasharray="2 1"/></svg></div>
<div class="t" style="left:77px;top:35px;font-size:11px;color:#000;letter-spacing:-0.15px;">A4 Tutorial PerfectBound</div>
<div style="position:absolute;left:42px;top:52px;width:9px;height:9px;background:#fff;border:1px solid #808080;"></div>
<div style="position:absolute;left:44px;top:56px;width:5px;height:1px;background:#000;"></div>
<div style="position:absolute;left:46px;top:54px;width:1px;height:5px;background:#000;"></div>
<div style="position:absolute;left:57px;top:50px;"><svg width="16" height="13" style="display:block"><rect x="1" y="1" width="14" height="11" fill="url(#gchk)"/><path d="M1 0.5H12L15.5 4" fill="none" stroke="#000"/><rect x="0" y="1" width="2" height="11" fill="#e00000"/><rect x="0" y="10" width="16" height="2" fill="#e00000"/><rect x="14" y="4" width="2" height="8" fill="#e00000"/><path d="M0 12.5H16" stroke="#000"/><path d="M4 9.5H6L8 7L5.5 5.5L8.5 2.5M9 9.5L12.5 6" fill="none" stroke="#d00000" stroke-width="1.4" stroke-dasharray="2 1"/></svg></div>
<div class="t" style="left:77px;top:51px;font-size:11px;color:#000;letter-spacing:-0.15px;">A5 Multi-Section Double-Web</div>
</div>
<div style="position:absolute;left:774px;top:560px;width:369px;height:201px;border:1px solid;border-color:#808080 #fff #fff #808080;box-shadow:inset 1px 1px #404040,inset -1px -1px #d4d0c8;background:#fff;"></div>
<div style="position:absolute;left:738px;top:400px;width:443px;height:249px;border:1px solid;border-color:#d4d0c8 #404040 #404040 #d4d0c8;box-shadow:inset 1px 1px #fff,inset -1px -1px #808080;background:#d4d0c8;"></div>
<div style="position:absolute;left:741px;top:403px;width:437px;height:18px;background:linear-gradient(to right,#0a246a,#a6caf0);"></div>
<div class="t" style="left:743px;top:407px;font-size:11px;font-weight:bold;color:#fff;letter-spacing:0.25px;">Layout Details</div>
<div style="position:absolute;left:746px;top:431px;width:338px;height:85px;border:1px solid;border-color:#808080 #fff #fff #808080;box-shadow:inset 1px 1px #fff,inset -1px -1px #808080;"></div>
<div class="t" style="left:754px;top:427px;font-size:11px;letter-spacing:-0.3px;background:#d4d0c8;padding:0 2px 0 2px;">Page Position Adjustment</div>
<div class="t" style="left:754px;top:466px;font-size:11px;color:#000;letter-spacing:-0.3px;">Odd pages</div>
<div class="t" style="left:818px;top:466px;font-size:11px;color:#000;letter-spacing:-0.3px;">Horizontal:</div>
<div style="position:absolute;left:873px;top:461px;width:75px;height:20px;border:1px solid;border-color:#808080 #fff #fff #808080;box-shadow:inset 1px 1px #404040,inset -1px -1px #d4d0c8;background:#fff;"></div>
<div class="t" style="left:876px;top:465px;font-size:11px;letter-spacing:-0.3px;color:#fff;background:#0a246a;padding:1px 0 1px 1px;">0 mm</div>
<div class="t" style="left:956px;top:466px;font-size:11px;color:#000;letter-spacing:-0.3px;">Vertical:</div>
<div style="position:absolute;left:1001px;top:461px;width:75px;height:20px;border:1px solid;border-color:#808080 #fff #fff #808080;box-shadow:inset 1px 1px #404040,inset -1px -1px #d4d0c8;background:#fff;"></div>
<div class="t" style="left:1005px;top:466px;font-size:11px;color:#000;letter-spacing:-0.3px;">0 mm</div>
<div class="t" style="left:754px;top:494px;font-size:11px;color:#000;letter-spacing:-0.3px;">Even pages</div>
<div class="t" style="left:818px;top:494px;font-size:11px;color:#000;letter-spacing:-0.3px;">Horizontal:</div>
<div style="position:absolute;left:873px;top:489px;width:75px;height:20px;border:1px solid;border-color:#808080 #fff #fff #808080;box-shadow:inset 1px 1px #404040,inset -1px -1px #d4d0c8;background:#fff;"></div>
<div class="t" style="left:877px;top:494px;font-size:11px;color:#000;letter-spacing:-0.3px;">0 mm</div>
<div class="t" style="left:956px;top:494px;font-size:11px;color:#000;letter-spacing:-0.3px;">Vertical:</div>
<div style="position:absolute;left:1001px;top:489px;width:75px;height:20px;border:1px solid;border-color:#808080 #fff #fff #808080;box-shadow:inset 1px 1px #404040,inset -1px -1px #d4d0c8;background:#fff;"></div>
<div class="t" style="left:1005px;top:494px;font-size:11px;color:#000;letter-spacing:-0.3px;">0 mm</div>
<div style="position:absolute;left:746px;top:529px;width:338px;height:35px;border:1px solid;border-color:#808080 #fff #fff #808080;box-shadow:inset 1px 1px #fff,inset -1px -1px #808080;"></div>
<div class="t" style="left:754px;top:525px;font-size:11px;letter-spacing:-0.3px;background:#d4d0c8;padding:0 2px 0 2px;">Shingling (Creep)</div>
<div class="t" style="left:842px;top:543px;font-size:11px;color:#000;letter-spacing:-0.3px;">Inner:</div>
<div style="position:absolute;left:873px;top:539px;width:75px;height:20px;border:1px solid;border-color:#808080 #fff #fff #808080;box-shadow:inset 1px 1px #404040,inset -1px -1px #d4d0c8;background:#fff;"></div>
<div class="t" style="left:877px;top:543px;font-size:11px;color:#000;letter-spacing:-0.3px;">20 mm</div>
<div class="t" style="left:966px;top:543px;font-size:11px;color:#000;letter-spacing:-0.3px;">Outer:</div>
<div style="position:absolute;left:1001px;top:539px;width:75px;height:20px;border:1px solid;border-color:#808080 #fff #fff #808080;box-shadow:inset 1px 1px #404040,inset -1px -1px #d4d0c8;background:#fff;"></div>
<div class="t" style="left:1005px;top:543px;font-size:11px;color:#000;letter-spacing:-0.3px;">0 mm</div>
<div style="position:absolute;left:746px;top:574px;width:338px;height:37px;border:1px solid;border-color:#808080 #fff #fff #808080;box-shadow:inset 1px 1px #fff,inset -1px -1px #808080;"></div>
<div class="t" style="left:754px;top:569px;font-size:11px;letter-spacing:-0.3px;background:#d4d0c8;padding:0 2px 0 2px;">Press Sheet Scaling Percentage</div>
<div class="t" style="left:819px;top:590px;font-size:11px;color:#000;letter-spacing:-0.3px;">Horizontal:</div>
<div style="position:absolute;left:873px;top:585px;width:75px;height:20px;border:1px solid;border-color:#808080 #fff #fff #808080;box-shadow:inset 1px 1px #404040,inset -1px -1px #d4d0c8;background:#fff;"></div>
<div class="t" style="left:877px;top:590px;font-size:11px;color:#000;letter-spacing:-0.3px;">100,0000</div>
<div class="t" style="left:956px;top:590px;font-size:11px;color:#000;letter-spacing:-0.3px;">Vertical:</div>
<div style="position:absolute;left:1001px;top:585px;width:75px;height:20px;border:1px solid;border-color:#808080 #fff #fff #808080;box-shadow:inset 1px 1px #404040,inset -1px -1px #d4d0c8;background:#fff;"></div>
<div class="t" style="left:1005px;top:590px;font-size:11px;color:#000;letter-spacing:-0.3px;">100,0000</div>
<div class="t" style="left:751px;top:622px;font-size:11px;color:#000;letter-spacing:-0.3px;">Bleed margin default:</div>
<div style="position:absolute;left:873px;top:617px;width:75px;height:20px;border:1px solid;border-color:#808080 #fff #fff #808080;box-shadow:inset 1px 1px #404040,inset -1px -1px #d4d0c8;background:#fff;"></div>
<div class="t" style="left:877px;top:622px;font-size:11px;color:#000;letter-spacing:-0.3px;">3 mm</div>
<div style="position:absolute;left:1095px;top:430px;width:75px;height:23px;background:#000;"></div>
<div style="position:absolute;left:1096px;top:431px;width:73px;height:21px;border:1px solid;border-color:#fff #404040 #404040 #fff;box-shadow:inset -1px -1px #808080;background:#d4d0c8;"></div>
<div class="t" style="left:1095px;top:436px;width:75px;text-align:center;font-size:11px;letter-spacing:-0.3px;color:#000;">OK</div>
<div style="position:absolute;left:1095px;top:463px;width:75px;height:23px;border:1px solid;border-color:#fff #404040 #404040 #fff;box-shadow:inset -1px -1px #808080;background:#d4d0c8;"></div>
<div class="t" style="left:1095px;top:469px;width:75px;text-align:center;font-size:11px;letter-spacing:-0.3px;color:#000;">Cancel</div>
</body></html>
